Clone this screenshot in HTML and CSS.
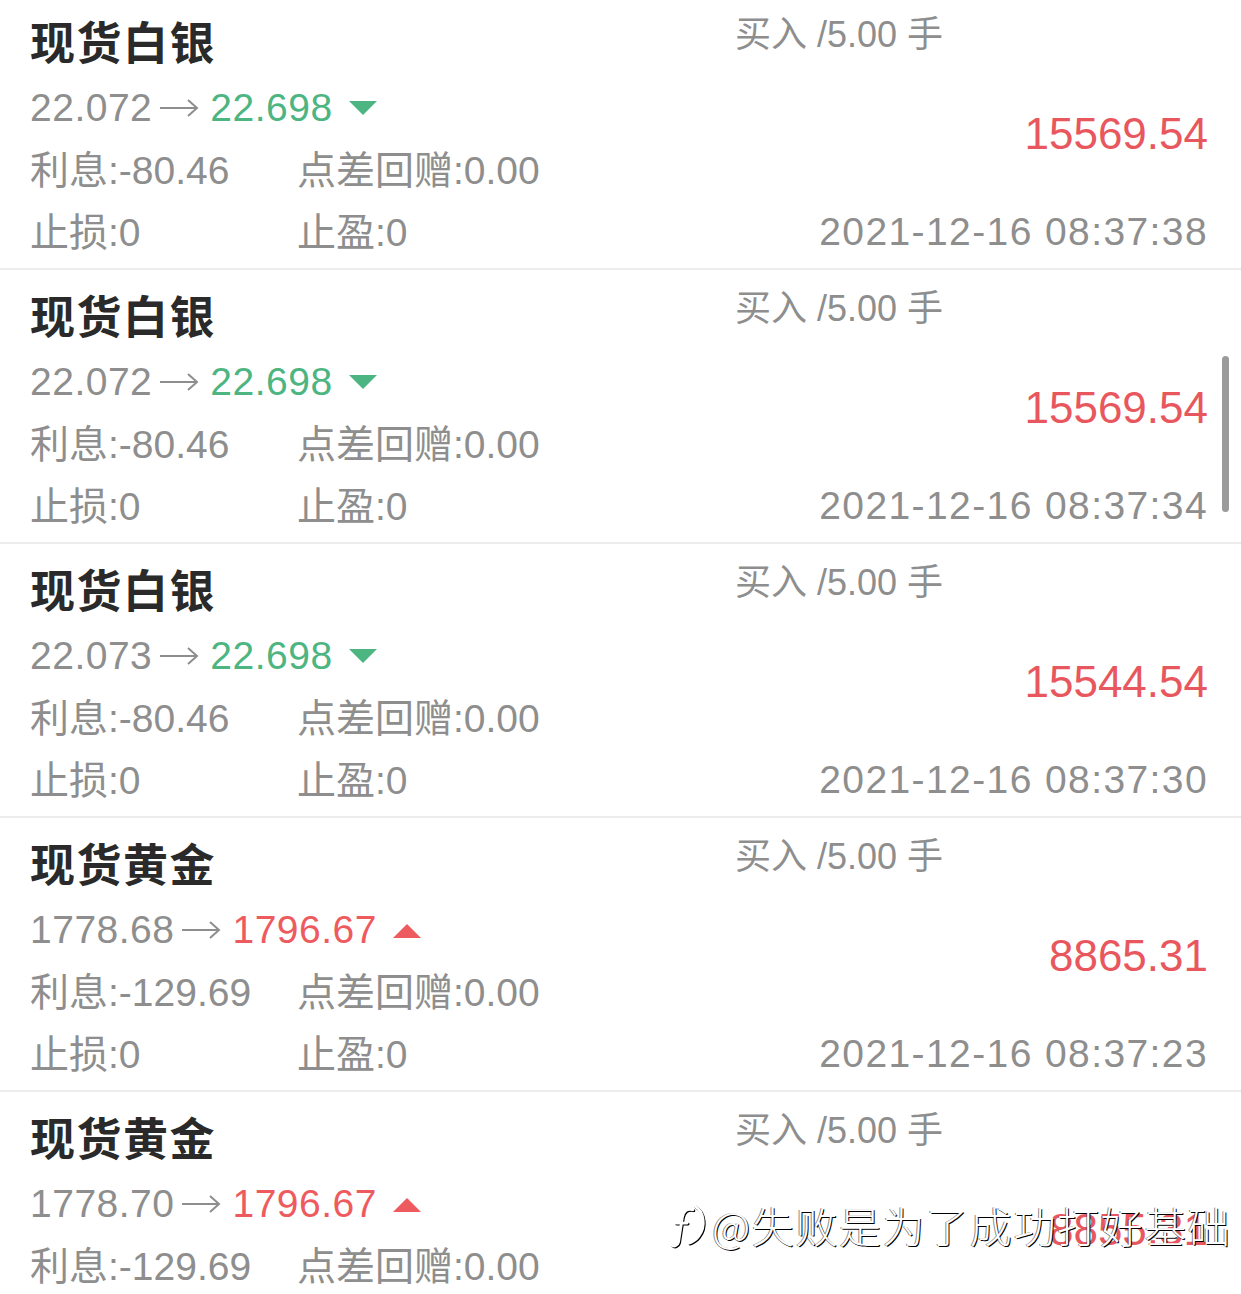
FILE: index.html
```html
<!DOCTYPE html>
<html lang="zh-CN">
<head>
<meta charset="utf-8">
<title>持仓记录</title>
<link rel="stylesheet" href="styles.css">
</head>
<body>
<div class="list">
  <div class="trade">
    <div class="left">
      <div class="name">现货白银</div>
      <div class="price"><span>22.072</span><svg class="arrow" viewBox="0 0 40 24" width="40" height="24"><path d="M1 12H38M29 4L38 12L29 20" /></svg><span class="down">22.698</span><svg class="tri" viewBox="0 0 28 15" width="28" height="15"><path d="M0 0H28L14 14Z" fill="#4db581"/></svg></div>
      <div class="pair"><span class="c1">利息:-80.46</span><span>点差回赠:0.00</span></div>
      <div class="pair last"><span class="c1">止损:0</span><span>止盈:0</span></div>
    </div>
    <div class="right">
      <div class="dir">买入 /5.00 手</div>
      <div class="profit">15569.54</div>
      <div class="time">2021-12-16 08:37:38</div>
    </div>
  </div>
  <div class="trade">
    <div class="left">
      <div class="name">现货白银</div>
      <div class="price"><span>22.072</span><svg class="arrow" viewBox="0 0 40 24" width="40" height="24"><path d="M1 12H38M29 4L38 12L29 20" /></svg><span class="down">22.698</span><svg class="tri" viewBox="0 0 28 15" width="28" height="15"><path d="M0 0H28L14 14Z" fill="#4db581"/></svg></div>
      <div class="pair"><span class="c1">利息:-80.46</span><span>点差回赠:0.00</span></div>
      <div class="pair last"><span class="c1">止损:0</span><span>止盈:0</span></div>
    </div>
    <div class="right">
      <div class="dir">买入 /5.00 手</div>
      <div class="profit">15569.54</div>
      <div class="time">2021-12-16 08:37:34</div>
    </div>
  </div>
  <div class="trade">
    <div class="left">
      <div class="name">现货白银</div>
      <div class="price"><span>22.073</span><svg class="arrow" viewBox="0 0 40 24" width="40" height="24"><path d="M1 12H38M29 4L38 12L29 20" /></svg><span class="down">22.698</span><svg class="tri" viewBox="0 0 28 15" width="28" height="15"><path d="M0 0H28L14 14Z" fill="#4db581"/></svg></div>
      <div class="pair"><span class="c1">利息:-80.46</span><span>点差回赠:0.00</span></div>
      <div class="pair last"><span class="c1">止损:0</span><span>止盈:0</span></div>
    </div>
    <div class="right">
      <div class="dir">买入 /5.00 手</div>
      <div class="profit">15544.54</div>
      <div class="time">2021-12-16 08:37:30</div>
    </div>
  </div>
  <div class="trade">
    <div class="left">
      <div class="name">现货黄金</div>
      <div class="price"><span>1778.68</span><svg class="arrow" viewBox="0 0 40 24" width="40" height="24"><path d="M1 12H38M29 4L38 12L29 20" /></svg><span class="up">1796.67</span><svg class="tri" viewBox="0 0 28 15" width="28" height="15"><path d="M0 15H28L14 1Z" fill="#ee5b5f"/></svg></div>
      <div class="pair"><span class="c1">利息:-129.69</span><span>点差回赠:0.00</span></div>
      <div class="pair last"><span class="c1">止损:0</span><span>止盈:0</span></div>
    </div>
    <div class="right">
      <div class="dir">买入 /5.00 手</div>
      <div class="profit">8865.31</div>
      <div class="time">2021-12-16 08:37:23</div>
    </div>
  </div>
  <div class="trade">
    <div class="left">
      <div class="name">现货黄金</div>
      <div class="price"><span>1778.70</span><svg class="arrow" viewBox="0 0 40 24" width="40" height="24"><path d="M1 12H38M29 4L38 12L29 20" /></svg><span class="up">1796.67</span><svg class="tri" viewBox="0 0 28 15" width="28" height="15"><path d="M0 15H28L14 1Z" fill="#ee5b5f"/></svg></div>
      <div class="pair"><span class="c1">利息:-129.69</span><span>点差回赠:0.00</span></div>
      <div class="pair last"><span class="c1">止损:0</span><span>止盈:0</span></div>
    </div>
    <div class="right">
      <div class="dir">买入 /5.00 手</div>
      <div class="profit">8855.31</div>
      <div class="time">2021-12-16 08:37:20</div>
    </div>
  </div>
</div>
<div class="scrollbar"></div>
<div class="watermark">
  <svg class="wm-logo" viewBox="0 0 44 52" width="42" height="50"><path d="M26 10C20 8 16 12 15 18L11 44C10 48 6 49 4 47M8 24H20M28 6C38 12 40 28 32 38C29 42 25 44 22 45" /></svg>
  <span class="wm-text">@失败是为了成功打好基础</span>
</div>
</body>
</html>
```
FILE: styles.css
```css
html, body {
  margin: 0;
  padding: 0;
  background: #ffffff;
  overflow: hidden;
}

body {
  font-family: "Liberation Sans", "Noto Sans CJK SC", sans-serif;
  color: #8e8e8e;
}

.list {
  margin-top: -4px;
}

.trade {
  display: flex;
  justify-content: space-between;
  height: 272px;
  padding: 0 33px 0 30px;
  border-bottom: 2px solid #ececec;
}

.left {
  display: flex;
  flex-direction: column;
  padding-top: 14px;
}

.name {
  font-family: "Noto Sans CJK SC", sans-serif;
  font-size: 45px;
  font-weight: 700;
  letter-spacing: 1.5px;
  line-height: 62px;
  color: #2a2a2a;
}

.price {
  display: flex;
  align-items: center;
  height: 62px;
  margin-top: 5px;
  font-size: 39px;
  line-height: 62px;
  letter-spacing: 0.5px;
}

.arrow {
  margin: 0 11px 0 7px;
  fill: none;
  stroke: #8e8e8e;
  stroke-width: 2;
}

.down {
  color: #4db581;
}

.up {
  color: #ee5b5f;
}

.tri {
  margin-left: 16px;
}

.pair {
  display: flex;
  height: 63px;
  align-items: center;
  font-size: 39px;
  line-height: 63px;
}

.pair.last {
  height: 62px;
  line-height: 62px;
}

.c1 {
  width: 267px;
}

.right {
  display: flex;
  flex-direction: column;
  align-items: flex-end;
  width: 473px;
  padding-top: 14px;
}

.dir {
  align-self: flex-start;
  font-size: 36px;
  line-height: 50px;
  color: #8e8e8e;
}

.profit {
  margin-top: 44px;
  font-size: 44px;
  line-height: 60px;
  color: #e9575e;
}

.time {
  margin-top: 36px;
  font-size: 39px;
  line-height: 63px;
  letter-spacing: 1.4px;
}

.scrollbar {
  position: absolute;
  left: 1222px;
  top: 356px;
  width: 7px;
  height: 156px;
  border-radius: 4px;
  background: #9b9b9b;
}

.watermark {
  position: absolute;
  left: 668px;
  top: 1199px;
  display: flex;
  align-items: center;
  gap: 2px;
  white-space: nowrap;
}

.wm-logo {
  fill: none;
  stroke: #ffffff;
  stroke-width: 3;
  stroke-linecap: round;
  filter: drop-shadow(1px 1px 0 #000000);
}

.wm-text {
  font-family: "Noto Sans CJK SC", sans-serif;
  font-weight: 300;
  font-size: 42px;
  letter-spacing: 1.6px;
  line-height: 52px;
  color: #ffffff;
  text-shadow: 1px 1px 0 #000000, -1px 0 0 rgba(0, 0, 0, 0.5);
}
```
